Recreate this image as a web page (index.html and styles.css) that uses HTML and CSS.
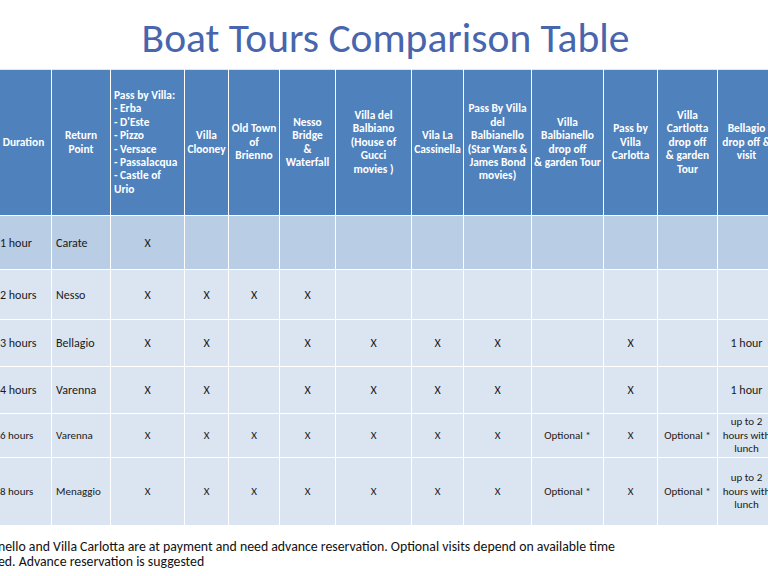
FILE: index.html
```html
<!DOCTYPE html>
<html lang="en">
<head>
<meta charset="utf-8">
<title>Boat Tours Comparison Table</title>
<link rel="stylesheet" href="styles.css">
</head>
<body>
<div class="slide">
  <h1 class="title">Boat Tours Comparison Table</h1>
  <table class="tours">
    <colgroup>
      <col style="width:56px"><col style="width:59px"><col style="width:74px"><col style="width:44px"><col style="width:51px"><col style="width:56px"><col style="width:76px"><col style="width:52px"><col style="width:68px"><col style="width:72px"><col style="width:54px"><col style="width:60px"><col style="width:58px">
    </colgroup>
    <thead>
      <tr>
        <th>Duration</th>
        <th>Return<br>Point</th>
        <th class="list">Pass by Villa:<br>- Erba<br>- D'Este<br>- Pizzo<br>- Versace<br>- Passalacqua<br>- Castle of<br>Urio</th>
        <th>Villa<br>Clooney</th>
        <th>Old Town<br>of<br>Brienno</th>
        <th>Nesso<br>Bridge<br>&amp;<br>Waterfall</th>
        <th>Villa del<br>Balbiano<br>(House of<br>Gucci<br>movies )</th>
        <th>Vila La<br>Cassinella</th>
        <th>Pass By Villa<br>del<br>Balbianello<br>(Star Wars &amp;<br>James Bond<br>movies)</th>
        <th>Villa<br>Balbianello<br>drop off<br>&amp; garden Tour</th>
        <th>Pass by<br>Villa<br>Carlotta</th>
        <th>Villa<br>Cartlotta<br>drop off<br>&amp; garden<br>Tour</th>
        <th>Bellagio<br>drop off &amp;<br>visit</th>
      </tr>
    </thead>
    <tbody>
      <tr class="r1 dark">
        <td class="left">1 hour</td><td class="left">Carate</td><td>X</td><td></td><td></td><td></td><td></td><td></td><td></td><td></td><td></td><td></td><td></td>
      </tr>
      <tr class="r2">
        <td class="left">2 hours</td><td class="left">Nesso</td><td>X</td><td>X</td><td>X</td><td>X</td><td></td><td></td><td></td><td></td><td></td><td></td><td></td>
      </tr>
      <tr class="r3">
        <td class="left">3 hours</td><td class="left">Bellagio</td><td>X</td><td>X</td><td></td><td>X</td><td>X</td><td>X</td><td>X</td><td></td><td>X</td><td></td><td>1 hour</td>
      </tr>
      <tr class="r4">
        <td class="left">4 hours</td><td class="left">Varenna</td><td>X</td><td>X</td><td></td><td>X</td><td>X</td><td>X</td><td>X</td><td></td><td>X</td><td></td><td>1 hour</td>
      </tr>
      <tr class="r5 small">
        <td class="left">6 hours</td><td class="left">Varenna</td><td>X</td><td>X</td><td>X</td><td>X</td><td>X</td><td>X</td><td>X</td><td>Optional *</td><td>X</td><td>Optional *</td><td>up to 2<br>hours with<br>lunch</td>
      </tr>
      <tr class="r6 small">
        <td class="left">8 hours</td><td class="left">Menaggio</td><td>X</td><td>X</td><td>X</td><td>X</td><td>X</td><td>X</td><td>X</td><td>Optional *</td><td>X</td><td>Optional *</td><td>up to 2<br>hours with<br>lunch</td>
      </tr>
    </tbody>
  </table>
  <div class="note">
    <p class="note-line">nello and Villa Carlotta are at payment and need advance reservation. Optional visits depend on available time</p>
    <p class="note-line">ed. Advance reservation is suggested</p>
  </div>
</div>
</body>
</html>
```

FILE: styles.css
```css
html, body {
  margin: 0;
  padding: 0;
  background: #ffffff;
  overflow: hidden;
}

.slide {
  width: 768px;
  height: 576px;
  overflow: hidden;
  font-family: Carlito, Lato, "Open Sans", sans-serif;
}

.title {
  margin: 0;
  height: 69px;
  line-height: 76px;
  text-align: center;
  font-weight: 400;
  font-size: 41.5px;
  color: #4766ad;
  padding-left: 3px;
  white-space: nowrap;
}

.tours {
  table-layout: fixed;
  border-collapse: collapse;
  margin-left: -5px;
  width: 780px;
}

.tours th,
.tours td {
  border: 1px solid rgba(255, 255, 255, 0.75);
  padding: 0 2px;
  text-align: center;
  vertical-align: middle;
  white-space: nowrap;
  overflow: hidden;
}

.tours th {
  background: #4f81bd;
  color: #ffffff;
  font-weight: 700;
  font-size: 11.4px;
  line-height: 13.4px;
  height: 145px;
  border-top-color: #dfe6f0;
}

.tours th.list {
  text-align: left;
  padding-left: 3px;
}

.tours td {
  background: #dbe5f1;
  color: #1a1a1a;
  font-size: 12px;
}

.tours tr.dark td {
  background: #b9cde5;
}

.tours td.left {
  text-align: left;
  padding-left: 4px;
}

.tours tr.r1 td { height: 53px; }
.tours tr.r2 td { height: 49px; }
.tours tr.r3 td { height: 46px; }
.tours tr.r4 td { height: 46px; }
.tours tr.r5 td { height: 43px; }
.tours tr.r6 td { height: 67px; }

.tours tr.small td {
  font-size: 11px;
  line-height: 13.4px;
}

.note {
  margin: 13px 0 0 -2px;
  font-size: 13.8px;
  color: #111111;
}

.note-line {
  margin: 0;
  height: 15px;
  line-height: 15px;
  white-space: nowrap;
}
```
